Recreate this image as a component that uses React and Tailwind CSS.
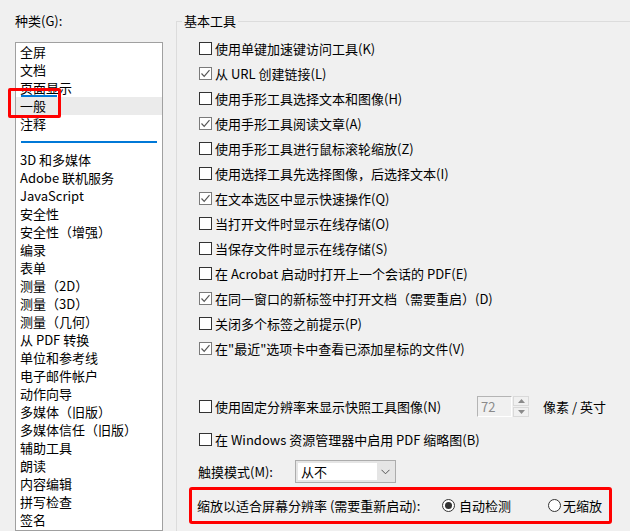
import React from 'react';

const font = { fontFamily: '"Noto Sans CJK SC", "Noto Sans", sans-serif' };

const categories = [
    '全屏', '文档', '页面显示', '一般', '注释', '---',
    '3D 和多媒体', 'Adobe 联机服务', 'JavaScript', '安全性', '安全性（增强）', '编录', '表单',
    '测量（2D）', '测量（3D）', '测量（几何）', '从 PDF 转换', '单位和参考线', '电子邮件帐户',
    '动作向导', '多媒体（旧版）', '多媒体信任（旧版）', '辅助工具', '朗读', '内容编辑', '拼写检查', '签名'
];

const options = [
    { label: '使用单键加速键访问工具(K)', checked: false },
    { label: '从 URL 创建链接(L)', checked: true },
    { label: '使用手形工具选择文本和图像(H)', checked: false },
    { label: '使用手形工具阅读文章(A)', checked: true },
    { label: '使用手形工具进行鼠标滚轮缩放(Z)', checked: false },
    { label: '使用选择工具先选择图像，后选择文本(I)', checked: false },
    { label: '在文本选区中显示快速操作(Q)', checked: true },
    { label: '当打开文件时显示在线存储(O)', checked: false },
    { label: '当保存文件时显示在线存储(S)', checked: false },
    { label: '在 Acrobat 启动时打开上一个会话的 PDF(E)', checked: false },
    { label: '在同一窗口的新标签中打开文档（需要重启）(D)', checked: true },
    { label: '关闭多个标签之前提示(P)', checked: false },
    { label: '在"最近"选项卡中查看已添加星标的文件(V)', checked: true }
];

const Checkbox = ({ checked }) => (
    <span className={`w-[13px] h-[13px] shrink-0 bg-white border flex items-center justify-center ${checked ? 'border-[#7a7a7a]' : 'border-[#333333]'}`}>
        {checked && (
            <svg width="11" height="11" viewBox="0 0 11 11">
                <path d="M1.5 5.5 L4.2 8.3 L9.5 2.2" fill="none" stroke="#555" strokeWidth="1.2" />
            </svg>
        )}
    </span>
);

const Radio = ({ checked }) => (
    <span className="w-[13px] h-[13px] shrink-0 rounded-full border border-[#333333] bg-white flex items-center justify-center">
        {checked && <span className="w-[7px] h-[7px] rounded-full bg-[#333333]" />}
    </span>
);

const App = () => {
    return (
        <div className="relative w-[630px] h-[531px] overflow-hidden bg-[#f0f0f0] text-[13px] text-black flex" style={font}>
            {/* category list */}
            <div className="w-[163px] shrink-0 pl-[15px] pt-[12px] flex flex-col">
                <div className="leading-[18px]">种类(G):</div>
                <div className="mt-[12px] flex-1 bg-white border border-[#a0a0a0] pt-0 overflow-hidden">
                    {categories.map((c, i) =>
                        c === '---' ? (
                            <div key={i} className="h-[18px] flex items-center px-[5px]">
                                <div className="h-[2px] w-full bg-[#0078d7]" />
                            </div>
                        ) : (
                            <div key={i} className={`relative h-[18px] leading-[18px] pl-[4px] whitespace-nowrap ${c === '一般' ? 'bg-[#ebebeb]' : ''}`}>
                                {c}
                                {c === '页面显示' && <span className="absolute left-[5px] bottom-0 w-[36px] h-[2px] bg-[#0078d7]" />}
                            </div>
                        )
                    )}
                </div>
            </div>

            {/* annotation around 一般 */}
            <div className="absolute left-[8px] top-[88px] w-[53px] h-[30px] border-[3px] border-[#ff0000] rounded-[2px]" />

            {/* settings group */}
            <fieldset className="ml-[13px] mt-[12px] w-[480px] shrink-0 border-t border-l border-[#dcdcdc]">
                <legend className="ml-[5px] px-[2px] leading-[18px]">基本工具</legend>
                <div className="pt-[6px] flex flex-col">
                    {options.map((o) => (
                        <div key={o.label} className="h-[25px] pl-[22px] flex items-center gap-[3px] whitespace-nowrap">
                            <Checkbox checked={o.checked} />
                            <span>{o.label}</span>
                        </div>
                    ))}

                    <div className="mt-[33px] h-[25px] pl-[22px] flex items-center whitespace-nowrap">
                        <div className="w-[278px] flex items-center gap-[3px]">
                            <Checkbox checked={false} />
                            <span>使用固定分辨率来显示快照工具图像(N)</span>
                        </div>
                        <div className="w-[35px] h-[21px] border border-[#b4b4b4] border-r-white border-b-white bg-[#f0f0f0] pl-[3px] leading-[19px] text-[#8a8a8a]">72</div>
                        <div className="ml-[1px] w-[16px] h-[21px] flex flex-col gap-[1px]">
                            <div className="flex-1 border border-[#d9d9d9] flex items-center justify-center">
                                <svg width="7" height="4" viewBox="0 0 7 4"><path d="M0 4 L3.5 0 L7 4 Z" fill="#8a8a8a" /></svg>
                            </div>
                            <div className="flex-1 border border-[#d9d9d9] flex items-center justify-center">
                                <svg width="7" height="4" viewBox="0 0 7 4"><path d="M0 0 L3.5 4 L7 0 Z" fill="#8a8a8a" /></svg>
                            </div>
                        </div>
                        <span className="ml-[14px]">像素 / 英寸</span>
                    </div>

                    <div className="mt-[8px] h-[25px] pl-[22px] flex items-center gap-[3px] whitespace-nowrap">
                        <Checkbox checked={false} />
                        <span>在 Windows 资源管理器中启用 PDF 缩略图(B)</span>
                    </div>

                    <div className="mt-[7px] h-[25px] pl-[21px] flex items-center whitespace-nowrap">
                        <span className="w-[97px]">触摸模式(M):</span>
                        <div className="w-[101px] h-[23px] border border-[#acacac] bg-[#e5e5e5] flex items-center p-[2px]">
                            <div className="w-[79px] h-full bg-white leading-[17px] pl-[3px]">从不</div>
                            <div className="flex-1 flex items-center justify-center">
                                <svg width="9" height="6" viewBox="0 0 9 6"><path d="M0.5 0.8 L4.5 4.8 L8.5 0.8" fill="none" stroke="#555" strokeWidth="1" /></svg>
                            </div>
                        </div>
                    </div>

                    <div className="mt-[3px] ml-[12px] w-[423px] h-[37px] border-[3px] border-[#ff0000] rounded-[3px] pl-[5px] flex items-center whitespace-nowrap">
                        <span className="w-[245px]">缩放以适合屏幕分辨率 (需要重新启动):</span>
                        <div className="w-[106px] flex items-center gap-[4px]">
                            <Radio checked />
                            <span>自动检测</span>
                        </div>
                        <div className="flex items-center gap-[2px]">
                            <Radio checked={false} />
                            <span>无缩放</span>
                        </div>
                    </div>
                </div>
            </fieldset>
        </div>
    );
};

export default App;
